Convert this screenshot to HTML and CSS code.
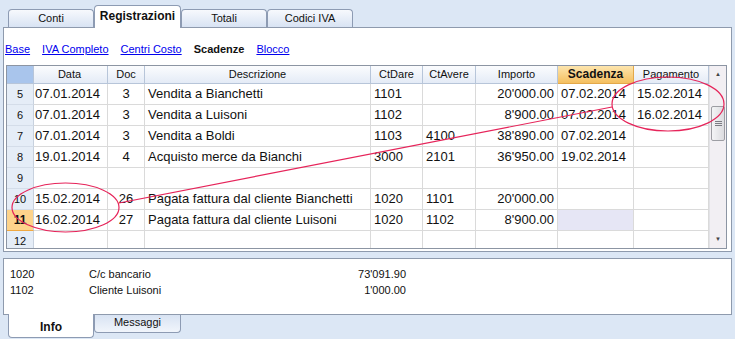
FILE: index.html
```html
<!DOCTYPE html>
<html>
<head>
<meta charset="utf-8">
<title>Registrazioni</title>
<link rel="stylesheet" href="styles.css">
</head>
<body>
<div class="tabs">
  <div class="tab">Conti</div>
  <div class="tab active">Registrazioni</div>
  <div class="tab">Totali</div>
  <div class="tab">Codici IVA</div>
</div>
<div class="panel">
  <div class="views">
    <a href="#">Base</a><a href="#">IVA Completo</a><a href="#">Centri Costo</a><b>Scadenze</b><a href="#">Blocco</a>
  </div>
  <div class="grid">
    <div class="rows">
      <div class="row head">
        <div class="num"></div><div>Data</div><div>Doc</div><div>Descrizione</div><div>CtDare</div><div>CtAvere</div><div>Importo</div><div class="sel">Scadenza</div><div>Pagamento</div>
      </div>
      <div class="row">
        <div class="num">5</div><div>07.01.2014</div><div class="c">3</div><div>Vendita a Bianchetti</div><div>1101</div><div></div><div class="r">20'000.00</div><div>07.02.2014</div><div>15.02.2014</div>
      </div>
      <div class="row">
        <div class="num">6</div><div>07.01.2014</div><div class="c">3</div><div>Vendita a Luisoni</div><div>1102</div><div></div><div class="r">8'900.00</div><div>07.02.2014</div><div>16.02.2014</div>
      </div>
      <div class="row">
        <div class="num">7</div><div>07.01.2014</div><div class="c">3</div><div>Vendita a Boldi</div><div>1103</div><div>4100</div><div class="r">38'890.00</div><div>07.02.2014</div><div></div>
      </div>
      <div class="row">
        <div class="num">8</div><div>19.01.2014</div><div class="c">4</div><div>Acquisto merce da Bianchi</div><div>3000</div><div>2101</div><div class="r">36'950.00</div><div>19.02.2014</div><div></div>
      </div>
      <div class="row">
        <div class="num">9</div><div></div><div></div><div></div><div></div><div></div><div></div><div></div><div></div>
      </div>
      <div class="row">
        <div class="num">10</div><div>15.02.2014</div><div class="c">26</div><div>Pagata fattura dal cliente Bianchetti</div><div>1020</div><div>1101</div><div class="r">20'000.00</div><div></div><div></div>
      </div>
      <div class="row current">
        <div class="num">11</div><div>16.02.2014</div><div class="c">27</div><div>Pagata fattura dal cliente Luisoni</div><div>1020</div><div>1102</div><div class="r">8'900.00</div><div class="cursor"></div><div></div>
      </div>
      <div class="row">
        <div class="num">12</div><div></div><div></div><div></div><div></div><div></div><div></div><div></div><div></div>
      </div>
    </div>
    <div class="scroll">
      <div class="sbtn">&#9650;</div>
      <div class="track"><div class="thumb"><span></span><span></span><span></span></div></div>
      <div class="sbtn">&#9660;</div>
    </div>
  </div>
</div>
<div class="info">
  <div class="irow"><span>1020</span><span>C/c bancario</span><span class="r">73'091.90</span></div>
  <div class="irow"><span>1102</span><span>Cliente Luisoni</span><span class="r">1'000.00</span></div>
</div>
<div class="btabs">
  <div class="btab active">Info</div>
  <div class="btab">Messaggi</div>
</div>
<svg class="marks" width="735" height="339" viewBox="0 0 735 339">
  <ellipse cx="65.5" cy="207.5" rx="53.5" ry="24.5"/>
  <line x1="119" y1="203" x2="612" y2="107"/>
  <ellipse cx="668" cy="104" rx="56" ry="27"/>
</svg>
</body>
</html>
```

FILE: styles.css
```css
* { box-sizing: border-box; }
html, body { margin: 0; padding: 0; }
body { background: #dce7f5; font-family: "Liberation Sans", Arial, sans-serif; font-size: 11px; color: #111; width: 735px; height: 339px; overflow: hidden; position: relative; }

.tabs { display: flex; align-items: flex-end; height: 27px; padding-left: 8px; }
.tab { width: 86px; height: 18px; border: 1px solid #8d9bb3; border-bottom: 0; border-radius: 4px 4px 0 0; background: linear-gradient(#f7f9fd, #d8e3f3); text-align: center; line-height: 17px; }
.tab.active { width: 87px; height: 23px; margin-bottom: -1px; background: #fff; font-weight: bold; font-size: 12px; line-height: 21px; position: relative; z-index: 1; }

.panel { margin: 0 3px; height: 225px; border: 1px solid #8e9aad; background: #fff; }
.views { display: flex; gap: 12px; padding: 14px 0 0 1px; height: 28px; line-height: 14px; }
.views a { color: #0000ee; }
.views b { color: #111; }

.grid { display: flex; margin: 9px 0 0 2px; width: 721px; height: 184px; border: 1px solid #8c95a3; }
.rows { width: 702px; height: 182px; overflow: hidden; }
.row { display: grid; grid-template-columns: 27px 74px 37px 226px 52px 53px 82px 76px 75px; height: 21px; font-size: 13px; line-height: 20px; }
.row > div { border-right: 1px solid #dadada; border-bottom: 1px solid #dadada; padding: 0 3px; white-space: nowrap; overflow: hidden; }
.row > div:nth-child(2) { padding-left: 1px; }
.row .c { text-align: center; }
.row .r { text-align: right; }
.row .num { background: #e5edf7; border-right-color: #c7d1de; border-bottom-color: #d4dde9; font-size: 11px; text-align: center; padding: 0; }
.row.head { height: 18px; font-size: 11px; line-height: 17px; }
.row.head > div { background: linear-gradient(#fbfcfe, #e4ebf6); border-right-color: #b7c5d9; border-bottom-color: #b7c5d9; text-align: center; }
.row.head > .num { background: #a9c5ec; }
.row.head > .sel { background: linear-gradient(#fde5ae, #f4bf5f); border-color: #e3a84a; font-weight: bold; font-size: 12px; }
.row.current .num { background: #fdd38b; border-bottom-color: #f0a840; font-weight: bold; font-size: 12px; }
.row .cursor { background: #e6e6f5; }

.scroll { width: 17px; height: 182px; display: flex; flex-direction: column; background: #f2eff3; border-left: 1px solid #e2e2e6; }
.sbtn { height: 17px; font-size: 6px; line-height: 17px; text-align: center; color: #444; }
.track { flex: 1; padding-top: 23px; }
.thumb { height: 35px; margin: 0 1px; border: 1px solid #9d9da3; border-radius: 2px; background: linear-gradient(90deg, #f4f4f6, #dcdce0); display: flex; flex-direction: column; justify-content: center; align-items: center; gap: 1px; }
.thumb span { display: block; width: 7px; height: 1px; background: #7c7c84; }

.info { margin: 6px 3px 0; height: 57px; border: 1px solid #8e9aad; background: #fff; padding: 7px 0 0 6px; }
.irow { display: grid; grid-template-columns: 79px 197px 120px; line-height: 16px; }
.irow .r { text-align: right; }

.btabs { display: flex; align-items: flex-start; padding-left: 8px; }
.btab { width: 87px; height: 18px; border: 1px solid #8d9bb3; border-top: 0; border-radius: 0 0 4px 4px; background: linear-gradient(#d8e3f3, #f1f5fb); text-align: center; line-height: 15px; }
.btab.active { width: 86px; height: 24px; margin-top: -1px; background: #fff; font-weight: bold; font-size: 12px; line-height: 22px; padding-top: 2px; position: relative; z-index: 1; }

.marks { position: absolute; left: 0; top: 0; pointer-events: none; }
.marks ellipse, .marks line { fill: none; stroke: #e6245a; stroke-width: 1.2; }
```
